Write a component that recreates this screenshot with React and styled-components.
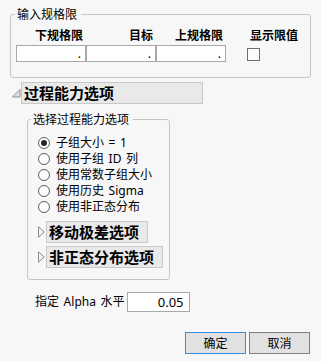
import React from "react";
import styled, { createGlobalStyle } from "styled-components";

const Global = createGlobalStyle`
  html, body { margin: 0; padding: 0; background: #f7f7f7; }
  body {
    font-family: "Noto Sans", "Noto Sans CJK SC", sans-serif;
    font-size: 12px;
    color: #000;
  }
`;

const Page = styled.div`
  width: 321px;
  height: 361px;
  box-sizing: border-box;
  padding: 6px 10px 0 10px;
  display: flex;
  flex-direction: column;
`;

const Group = styled.fieldset`
  margin: ${(p) => p.$margin || "0"};
  padding: ${(p) => p.$padding};
  width: ${(p) => p.$width || "auto"};
  box-sizing: border-box;
  border: 1px solid #c6c6c6;
  border-radius: 3px;
  min-inline-size: 0;
`;

const Legend = styled.legend`
  margin-left: ${(p) => p.$offset}px;
  padding: 0 4px 0 2px;
  font-size: 12px;
  line-height: 17px;
`;

const SpecGrid = styled.div`
  display: grid;
  grid-template-columns: 70px 70px 70px 1fr;
  row-gap: 2px;
`;

const ColHead = styled.div`
  font-weight: 700;
  font-size: 12px;
  line-height: 14px;
  text-align: ${(p) => (p.$left ? "left" : "right")};
  padding-right: ${(p) => (p.$left ? 0 : 3)}px;
  margin-left: ${(p) => (p.$left ? 24 : 0)}px;
`;

const SpecInput = styled.input`
  width: 70px;
  height: 17px;
  box-sizing: border-box;
  border: 1px solid #a8a8a8;
  background: #fff;
  padding: 0 4px 0 0;
  margin: 0;
  font-family: inherit;
  font-size: 12px;
  line-height: 15px;
  text-align: right;
  color: #000;
  outline: none;
`;

const CheckBox = styled.span`
  display: block;
  width: 13px;
  height: 13px;
  box-sizing: border-box;
  border: 1px solid #6e6e6e;
  background: #fcfcfc;
  margin: 3px 0 0 21px;
`;

const SectionHead = styled.div`
  display: flex;
  align-items: center;
  margin: ${(p) => p.$margin || "0"};
`;

const HeadBox = styled.div`
  box-sizing: border-box;
  height: 22px;
  width: ${(p) => p.$width || "auto"};
  background: #e9e9e9;
  border: 1px solid #c8c8c8;
  padding: 0 ${(p) => (p.$width ? 0 : 8)}px 0 2px;
  font-weight: 700;
  font-size: 15px;
  line-height: 20px;
  white-space: nowrap;
`;

const Arrow = styled.svg`
  display: block;
  flex: none;
  margin-right: ${(p) => p.$gap}px;
`;

const RadioList = styled.div`
  display: flex;
  flex-direction: column;
`;

const RadioRow = styled.div`
  display: flex;
  align-items: center;
  height: 16px;
  font-size: 12px;
  line-height: 16px;
  word-spacing: 1.5px;
  white-space: pre;
`;

const RadioDot = styled.span`
  flex: none;
  width: 12px;
  height: 12px;
  box-sizing: border-box;
  border-radius: 50%;
  border: 1px solid #5e5e5e;
  background: #fff;
  margin-right: 6px;
  display: flex;
  align-items: center;
  justify-content: center;
  &::after {
    content: "";
    width: 6px;
    height: 6px;
    border-radius: 50%;
    background: ${(p) => (p.$on ? "#262626" : "transparent")};
  }
`;

const SubHeads = styled.div`
  display: flex;
  flex-direction: column;
  gap: 3px;
  margin-top: 6px;
`;

const AlphaRow = styled.div`
  display: flex;
  align-items: center;
  margin: 12px 0 0 25px;
  font-size: 12px;
  line-height: 20px;
  word-spacing: 1.5px;
  white-space: pre;
`;

const AlphaInput = styled.input`
  width: 63px;
  height: 20px;
  box-sizing: border-box;
  margin: 0 0 0 2px;
  border: 1px solid #a8a8a8;
  background: #fff;
  padding: 0 5px 0 0;
  font-family: inherit;
  font-size: 13px;
  text-align: right;
  color: #000;
  outline: none;
`;

const Buttons = styled.div`
  display: flex;
  justify-content: flex-end;
  gap: 3px;
  margin: 20px 1px 0 0;
`;

const Button = styled.button`
  width: 61px;
  height: 22px;
  box-sizing: border-box;
  border: 1px solid ${(p) => (p.$primary ? "#2e8fe6" : "#7f7f7f")};
  background: #e1e1e1;
  font-family: inherit;
  font-size: 12px;
  color: #000;
  padding: 0;
  margin: 0;
`;

const OpenArrow = () => (
  <Arrow width="10" height="10" viewBox="0 0 10 10" $gap={0}>
    <path d="M9 1.5 L9 9 L1.5 9 Z" fill="#e4e4e4" stroke="#8c8c8c" strokeWidth="1" strokeLinejoin="round" />
  </Arrow>
);

const ClosedArrow = () => (
  <Arrow width="7" height="12" viewBox="0 0 7 12" $gap={1}>
    <path d="M0.5 0.8 L6.2 6 L0.5 11.2 Z" fill="#f2f2f2" stroke="#8c8c8c" strokeWidth="1" strokeLinejoin="round" />
  </Arrow>
);

const specCols = ["下规格限", "目标", "上规格限"];
const radios = ["子组大小 = 1", "使用子组 ID 列", "使用常数子组大小", "使用历史 Sigma", "使用非正态分布"];

export default function App() {
  return (
    <>
      <Global />
      <Page>
        <Group $padding="6px 5px 15px 5px">
          <Legend $offset={-1}>输入规格限</Legend>
          <SpecGrid>
            {specCols.map((c) => (
              <ColHead key={c}>{c}</ColHead>
            ))}
            <ColHead $left>显示限值</ColHead>
            {specCols.map((c) => (
              <SpecInput key={c} readOnly value="." />
            ))}
            <CheckBox role="checkbox" aria-checked="false" />
          </SpecGrid>
        </Group>

        <SectionHead $margin="4px 0 0 1px">
          <OpenArrow />
          <HeadBox $width="182px">过程能力选项</HeadBox>
        </SectionHead>

        <Group $margin="7px 0 0 17px" $width="143px" $padding="7px 4px 11px 10px">
          <Legend $offset={-7}>选择过程能力选项</Legend>
          <RadioList>
            {radios.map((r, i) => (
              <RadioRow key={r}>
                <RadioDot $on={i === 0} />
                {r}
              </RadioRow>
            ))}
          </RadioList>
          <SubHeads>
            <SectionHead>
              <ClosedArrow />
              <HeadBox>移动极差选项</HeadBox>
            </SectionHead>
            <SectionHead>
              <ClosedArrow />
              <HeadBox>非正态分布选项</HeadBox>
            </SectionHead>
          </SubHeads>
        </Group>

        <AlphaRow>
          指定 Alpha 水平
          <AlphaInput readOnly value="0.05" />
        </AlphaRow>

        <Buttons>
          <Button $primary>确定</Button>
          <Button>取消</Button>
        </Buttons>
      </Page>
    </>
  );
}
